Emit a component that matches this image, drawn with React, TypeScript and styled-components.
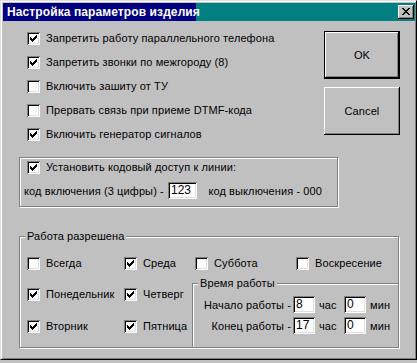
import React from "react";
import styled, { createGlobalStyle } from "styled-components";

const GlobalStyle = createGlobalStyle`
  body {
    margin: 0;
    background: #c0c0c0;
    font-family: "Liberation Sans", Arial, sans-serif;
    font-size: 11px;
    letter-spacing: 0.1px;
    color: #000;
  }
`;

const Window = styled.div`
  width: 417px;
  height: 360px;
  box-sizing: border-box;
  background: #c0c0c0;
  border-top: 1px solid #dfdfdf;
  border-left: 1px solid #dfdfdf;
  border-right: 1px solid #000;
  border-bottom: 1px solid #000;
  box-shadow: inset 1px 1px #fff, inset -1px -1px #808080;
  padding: 2px 1px 1px 2px;
  display: flex;
  flex-direction: column;
`;

const TitleBar = styled.div`
  height: 18px;
  flex-shrink: 0;
  background: #008080;
  display: flex;
  align-items: center;
`;

const TitleText = styled.div`
  height: 18px;
  width: 193px;
  flex-shrink: 0;
  box-sizing: border-box;
  padding-left: 4px;
  background: #000080;
  color: #fff;
  font-weight: bold;
  font-size: 12px;
  letter-spacing: 0.1px;
  line-height: 18px;
  white-space: nowrap;
`;

const CloseButton = styled.div`
  margin-left: auto;
  margin-right: 1px;
  width: 16px;
  height: 14px;
  box-sizing: border-box;
  background: #c0c0c0;
  box-shadow: inset -1px -1px #000, inset 1px 1px #fff, inset -2px -2px #808080;
  display: flex;
  align-items: center;
  justify-content: center;
  padding: 0 1px 1px 0;
`;

const Content = styled.div`
  display: flex;
  flex-direction: column;
  padding-left: 16px;
`;

const TopSection = styled.div`
  display: flex;
  padding-top: 5px;
`;

const CheckList = styled.div`
  display: flex;
  flex-direction: column;
  padding-left: 8px;
`;

const ListRow = styled.div`
  display: flex;
  align-items: center;
  height: 24px;
  white-space: nowrap;
`;

const Row = styled.div`
  display: flex;
  align-items: center;
  white-space: nowrap;
`;

const Label = styled.span`
  margin-left: 6px;
  line-height: 13px;
`;

const Box = styled.span`
  display: inline-flex;
  width: 13px;
  height: 13px;
  flex-shrink: 0;
  box-sizing: border-box;
  background: #fff;
  box-shadow: inset 1px 1px #808080, inset -1px -1px #fff, inset 2px 2px #000,
    inset -2px -2px #dfdfdf;
  padding: 3px 0 0 3px;
`;

const ButtonColumn = styled.div`
  margin-left: auto;
  margin-right: 15px;
  padding-top: 5px;
  display: flex;
  flex-direction: column;
  gap: 8px;
`;

const Button = styled.div<{ $default?: boolean }>`
  width: 76px;
  height: 48px;
  box-sizing: border-box;
  display: flex;
  align-items: center;
  justify-content: center;
  border: ${(p) => (p.$default ? "1px solid #000" : "none")};
  box-shadow: inset -1px -1px #000, inset 1px 1px #fff, inset -2px -2px #808080;
  font-size: 11px;
`;

const Group = styled.div<{ $width: number; $height: number }>`
  position: relative;
  width: ${(p) => p.$width}px;
  height: ${(p) => p.$height}px;
  box-sizing: border-box;
  border: 1px solid #808080;
  box-shadow: inset 1px 1px #fff, 1px 1px #fff;
`;

const Legend = styled.span<{ $left: number }>`
  position: absolute;
  top: -7px;
  left: ${(p) => p.$left}px;
  padding: 0 2px;
  background: #c0c0c0;
  line-height: 13px;
  white-space: nowrap;
`;

const AccessGroup = styled(Group)`
  margin-top: 11px;
  padding: 3px 15px 0 7px;
`;

const CodeRow = styled(Row)`
  margin-top: 8px;
  margin-left: -3px;
  height: 17px;
`;

const CodeLabel = styled.span`
  width: 144px;
  flex-shrink: 0;
`;

const OffLabel = styled.span`
  margin-left: auto;
`;

const Field = styled.div<{ $width: number }>`
  width: ${(p) => p.$width}px;
  height: 17px;
  flex-shrink: 0;
  box-sizing: border-box;
  background: #fff;
  box-shadow: inset 1px 1px #808080, inset -1px -1px #fff, inset 2px 2px #000,
    inset -2px -2px #dfdfdf;
  padding: 0 0 0 3px;
  font-size: 12px;
  letter-spacing: 0;
  line-height: 17px;
`;

const WorkGroup = styled(Group)`
  margin-top: 29px;
  padding: 20px 0 0 7px;
  display: flex;
  flex-direction: column;
`;

const DaysTop = styled.div`
  display: grid;
  grid-template-columns: 97px 68px 104px 1fr;
  height: 13px;
`;

const DayCell = styled(Row)<{ $shift?: number }>`
  margin-left: ${(p) => p.$shift ?? 0}px;
`;

const BottomArea = styled.div`
  flex: 1;
  display: flex;
`;

const DaysGrid = styled.div`
  display: grid;
  grid-template-columns: 97px 68px;
  grid-auto-rows: 13px;
  row-gap: 19px;
  padding-top: 18px;
  align-content: start;
`;

const TimeGroup = styled.div`
  position: relative;
  flex: 1;
  margin-top: 13px;
  border-top: 1px solid #808080;
  border-left: 1px solid #808080;
  box-shadow: inset 1px 1px #fff;
  padding-top: 12px;
  display: flex;
  flex-direction: column;
  gap: 4px;
`;

const TimeRow = styled(Row)`
  height: 17px;
`;

const TimeLabel = styled.span`
  width: 98px;
  flex-shrink: 0;
  text-align: right;
  margin-right: 2px;
`;

const Unit = styled.span<{ $width?: number }>`
  margin-left: 4px;
  flex-shrink: 0;
  width: ${(p) => (p.$width ? `${p.$width}px` : "auto")};
`;

const Check = () => (
  <svg width="7" height="7" viewBox="0 0 7 7" shapeRendering="crispEdges">
    <path
      d="M6 0h1v1h-1zM5 1h2v1h-2zM0 2h1v1h-1zM4 2h3v1h-3zM0 3h2v1h-2zM3 3h3v1h-3zM0 4h5v1h-5zM1 5h3v1h-3zM2 6h1v1h-1z"
      fill="#000"
    />
  </svg>
);

const CloseGlyph = () => (
  <svg width="8" height="7" viewBox="0 0 8 7" shapeRendering="crispEdges">
    <path
      d="M0 0h2v1h-2zM6 0h2v1h-2zM1 1h2v1h-2zM5 1h2v1h-2zM2 2h4v1h-4zM3 3h2v1h-2zM2 4h4v1h-4zM1 5h2v1h-2zM5 5h2v1h-2zM0 6h2v1h-2zM6 6h2v1h-2z"
      fill="#000"
    />
  </svg>
);

const CheckBox = ({ checked }: { checked?: boolean }) => (
  <Box>{checked && <Check />}</Box>
);

const options = [
  { text: "Запретить работу параллельного телефона", checked: true },
  { text: "Запретить звонки по межгороду (8)", checked: true },
  { text: "Включить зашиту от ТУ", checked: false },
  { text: "Прервать связь при приеме DTMF-кода", checked: false },
  { text: "Включить генератор сигналов", checked: true },
];

export default function App() {
  return (
    <>
      <GlobalStyle />
      <Window>
        <TitleBar>
          <TitleText>Настройка параметров изделия</TitleText>
          <CloseButton>
            <CloseGlyph />
          </CloseButton>
        </TitleBar>
        <Content>
          <TopSection>
            <CheckList>
              {options.map((o) => (
                <ListRow key={o.text}>
                  <CheckBox checked={o.checked} />
                  <Label>{o.text}</Label>
                </ListRow>
              ))}
            </CheckList>
            <ButtonColumn>
              <Button $default>OK</Button>
              <Button>Cancel</Button>
            </ButtonColumn>
          </TopSection>

          <AccessGroup $width={319} $height={50}>
            <Row>
              <CheckBox checked />
              <Label>Установить кодовый доступ к линии:</Label>
            </Row>
            <CodeRow>
              <CodeLabel>код включения (3 цифры) -</CodeLabel>
              <Field $width={29}>123</Field>
              <OffLabel>код выключения - 000</OffLabel>
            </CodeRow>
          </AccessGroup>

          <WorkGroup $width={380} $height={112}>
            <Legend $left={5}>Работа разрешена</Legend>
            <DaysTop>
              <DayCell>
                <CheckBox />
                <Label>Всегда</Label>
              </DayCell>
              <DayCell>
                <CheckBox checked />
                <Label>Среда</Label>
              </DayCell>
              <DayCell $shift={3}>
                <CheckBox />
                <Label>Суббота</Label>
              </DayCell>
              <DayCell>
                <CheckBox />
                <Label>Воскресение</Label>
              </DayCell>
            </DaysTop>
            <BottomArea>
              <DaysGrid>
                <DayCell>
                  <CheckBox checked />
                  <Label>Понедельник</Label>
                </DayCell>
                <DayCell>
                  <CheckBox checked />
                  <Label>Четверг</Label>
                </DayCell>
                <DayCell>
                  <CheckBox checked />
                  <Label>Вторник</Label>
                </DayCell>
                <DayCell>
                  <CheckBox checked />
                  <Label>Пятница</Label>
                </DayCell>
              </DaysGrid>
              <TimeGroup>
                <Legend $left={5}>Время работы</Legend>
                <TimeRow>
                  <TimeLabel>Начало работы -</TimeLabel>
                  <Field $width={22}>8</Field>
                  <Unit $width={25}>час</Unit>
                  <Field $width={22}>0</Field>
                  <Unit>мин</Unit>
                </TimeRow>
                <TimeRow>
                  <TimeLabel>Конец работы -</TimeLabel>
                  <Field $width={22}>17</Field>
                  <Unit $width={25}>час</Unit>
                  <Field $width={22}>0</Field>
                  <Unit>мин</Unit>
                </TimeRow>
              </TimeGroup>
            </BottomArea>
          </WorkGroup>
        </Content>
      </Window>
    </>
  );
}
